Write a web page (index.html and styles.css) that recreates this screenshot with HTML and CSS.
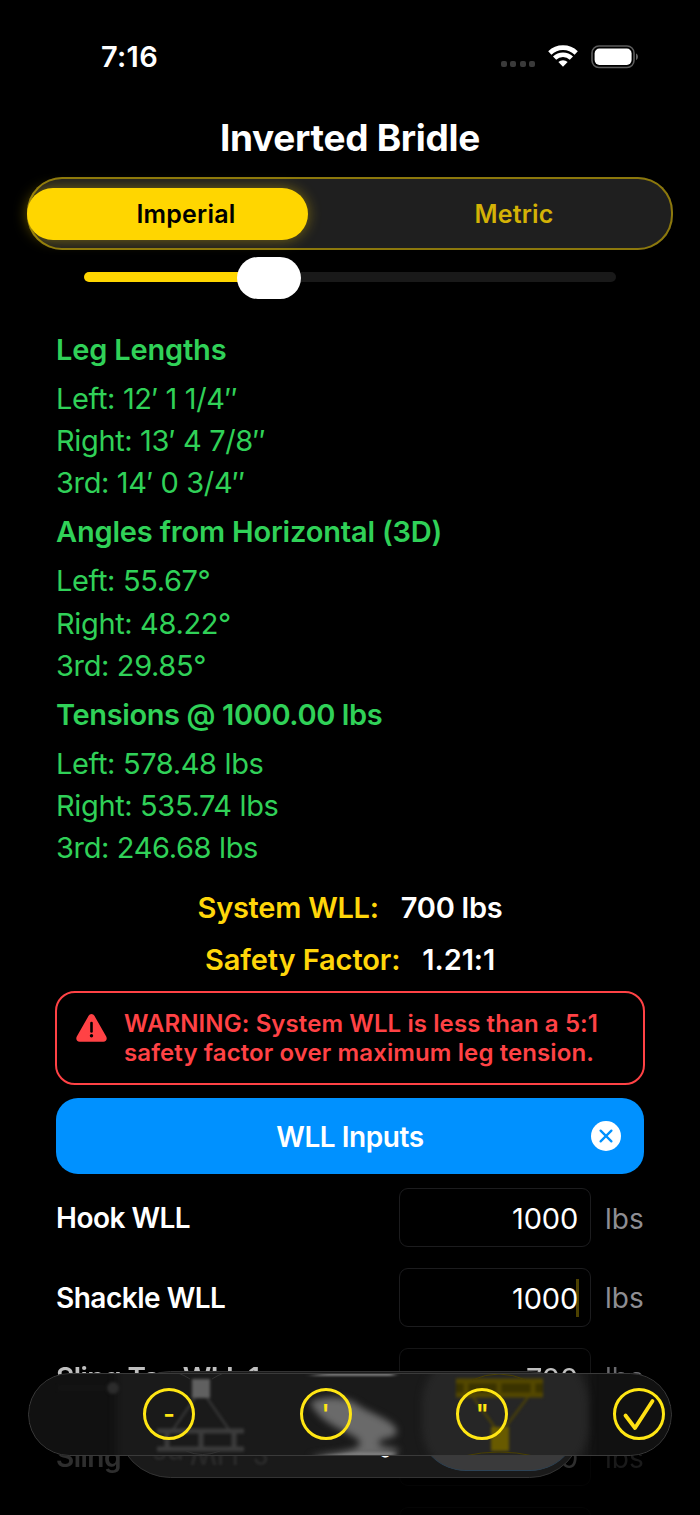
FILE: index.html
```html
<!DOCTYPE html>
<html lang="en">
<head>
  <meta charset="UTF-8">
  <meta name="viewport" content="width=device-width, initial-scale=1.0">
  <title>Inverted Bridle</title>
  <link rel="stylesheet" href="styles.css">
</head>
<body>

  <div class="screen">
    <!-- Status Bar -->
    <div class="status-bar">
      <span class="time">7:16</span>
      <div class="status-icons">
        <div class="signal"><i></i><i></i><i></i><i></i></div>
        <svg class="wifi" viewBox="0 0 30 22" width="30" height="22">
          <g fill="none" stroke="#fff" stroke-width="4.6">
            <path d="M1.800 8a19 19 0 0 1 26.400 0"/>
            <path d="M6.600 13.200a12 12 0 0 1 16.800 0"/>
          </g>
          <path d="M10.400 17a6.600 6.600 0 0 1 9.200 0L15 21.800z" fill="#fff"/>
        </svg>
        <svg class="battery" viewBox="0 0 48 24" width="48" height="24">
          <rect x="1" y="1" width="42" height="21.500" rx="7" fill="none" stroke="#5c5c5c" stroke-width="1.600"/>
          <rect x="3.600" y="3.600" width="37" height="16.300" rx="4.800" fill="#fff"/>
          <path d="M45 8.500c2.600 1 2.600 5.500 0 6.500z" fill="#666"/>
        </svg>
      </div>
    </div>

    <h1>Inverted Bridle</h1>

    <!-- Unit Switch -->
    <div class="segment">
      <span class="segment-pill"></span>
      <span class="segment-item active">Imperial</span>
      <span class="segment-item">Metric</span>
    </div>

    <div class="slider">
      <div class="slider-fill"></div>
      <div class="slider-thumb"></div>
      <div class="slider-rest"></div>
    </div>

    <!-- Results -->
    <div class="results">
      <h2>Leg Lengths</h2>
      <p>Left: 12′ 1 1/4″</p>
      <p>Right: 13′ 4 7/8″</p>
      <p>3rd: 14′ 0 3/4″</p>
      <h2>Angles from Horizontal (3D)</h2>
      <p>Left: 55.67°</p>
      <p>Right: 48.22°</p>
      <p>3rd: 29.85°</p>
      <h2 class="tensions">Tensions @ 1000.00 lbs</h2>
      <p>Left: 578.48 lbs</p>
      <p>Right: 535.74 lbs</p>
      <p>3rd: 246.68 lbs</p>
    </div>

    <div class="summary"><span>System WLL:</span><b>700 lbs</b></div>
    <div class="summary safety"><span>Safety Factor:</span><b>1.21:1</b></div>

    <div class="warning">
      <svg viewBox="0 0 31 28" width="31" height="28">
        <path d="M12.600 1.800a3.300 3.300 0 0 1 5.800 0l11.800 20.700c1.300 2.300 0 5.200-2.900 5.200H3.700c-2.900 0-4.200-2.900-2.900-5.200z" fill="#ff4245"/>
        <path d="M15.500 9v8.500" stroke="#000" stroke-width="2.600" stroke-linecap="round"/>
        <circle cx="15.500" cy="21.800" r="1.700" fill="#000"/>
      </svg>
      <p>WARNING: System WLL is less than a 5:1<br>safety factor over maximum leg tension.</p>
    </div>

    <div class="wll-button">
      <span>WLL Inputs</span>
      <svg viewBox="0 0 30 30" width="30" height="30">
        <circle cx="15" cy="15" r="15" fill="#fff"/>
        <path d="M9.600 9.600l10.800 10.800M20.400 9.600L9.600 20.400" stroke="#0091ff" stroke-width="2.300" stroke-linecap="round"/>
      </svg>
    </div>

    <!-- WLL Fields -->
    <div class="fields">
      <div class="field"><label>Hook WLL</label><div class="input">1000</div><span>lbs</span></div>
      <div class="field"><label>Shackle WLL</label><div class="input">1000<i class="caret"></i></div><span>lbs</span></div>
      <div class="field fade"><label>Sling Tag WLL 1</label><div class="input">700</div><span>lbs</span></div>
      <div class="field fade-more"><label>Sling</label><div class="input">700</div><span>lbs</span></div>
      <div class="field fade-more"><label></label><div class="input"></div><span></span></div>
    </div>

    <!-- Tab bar, sits under the keyboard toolbar -->
    <div class="tab-bar">
      <span class="tab-refraction">ag WLL 2</span>
      <div class="tab-selected"></div>
      <span class="tab-label">g</span>
    </div>

    <div class="toolbar">
      <svg class="glass" viewBox="0 0 644 84" width="644" height="84" color-interpolation-filters="sRGB">
        <defs>
          <filter id="soft" x="-20%" y="-20%" width="140%" height="140%"><feGaussianBlur stdDeviation="1.700"/></filter>
          <filter id="softer" x="-20%" y="-40%" width="140%" height="180%"><feGaussianBlur stdDeviation="3.500"/></filter>
          <filter id="streak" x="-20%" y="-200%" width="140%" height="500%"><feGaussianBlur stdDeviation="3 1"/></filter>
        </defs>
        <rect x="88" y="-40" width="474" height="160" rx="30" fill="#1a1a1a" filter="url(#softer)"/>
        <rect x="394" y="-20" width="166" height="124" rx="50" fill="#262626" filter="url(#softer)"/>
        <rect x="30" y="12" width="48" height="6" fill="#141414" filter="url(#soft)"/>
        <circle cx="85" cy="15" r="6" fill="#2c2c2c" filter="url(#soft)"/>
        <g filter="url(#soft)" stroke="#3c3c3c" fill="none">
          <rect x="164" y="6" width="18" height="19" fill="#606060" stroke="none"/>
          <path d="M167 25l-23 33M179 25l23 33" stroke-width="2"/>
          <path d="M129 58h87M129 76h87" stroke-width="5"/>
          <path d="M139 58v18M173 58v18M206 58v18" stroke-width="5"/>
        </g>
        <path d="M282 29c16-7 36-6 48 3 12 9 38 15 39 27-2 8-20 5-18 12 1 4 20 3 20 7 0 6-55 8-90 6 20-5 51-5 51-14-1-10-38-14-50-41z" fill="#6a6a6a" filter="url(#softer)"/>
        <path d="M280 3h86v-3H300zM286 83l44-4h36v4z" fill="#7d7d7d" filter="url(#streak)"/>
        <g filter="url(#soft)" stroke="#544800" fill="none">
          <rect x="428" y="6" width="87" height="18" fill="#3a3300" stroke="none"/>
          <path d="M428 8h87M428 22h87" stroke-width="5"/>
          <path d="M438 8v14M471 8v14M505 8v14" stroke-width="5"/>
          <path d="M445 24l23 32M500 24l-24 32" stroke-width="2"/>
          <rect x="463" y="54" width="18" height="24" fill="#685a00" stroke="none"/>
        </g>
        <path d="M444 7q27-12 54 0M436 83q35-8 70 0" fill="none" stroke="#4a4000"/>
        <path d="M150 0q6 2 12 6M196 0q-6 2-12 6M158 78q16 7 34 0" fill="none" stroke="#333"/>
      </svg>
      <span class="key">-</span>
      <span class="key">'</span>
      <span class="key">"</span>
      <span class="key done">
        <svg viewBox="0 0 52 52" width="52" height="52">
          <path d="M12.500 27.500l9.500 12.500L39.500 13" fill="none" stroke="#ffe014" stroke-width="3.800" stroke-linecap="round" stroke-linejoin="round"/>
        </svg>
      </span>
    </div>
  </div>

</body>
</html>
```
FILE: styles.css
```css
/* Global Styles */
* {
  box-sizing: border-box;
}

body {
  font-family: Inter, "Liberation Sans", sans-serif;
  background-color: #000;
  color: #fff;
  margin: 0;
}

.screen {
  position: relative;
  width: 700px;
  height: 1515px;
  overflow: hidden;
}

h1, h2, p {
  margin: 0;
}

/* Status Bar */
.status-bar {
  display: flex;
  justify-content: space-between;
  height: 114px;
  padding: 0 62px 0 101px;
  align-items: center;
}

.time {
  margin-top: -1px;
  font-size: 29px;
  font-weight: 600;
  letter-spacing: 0.300px;
}

.status-icons {
  display: flex;
  align-items: center;
}

.signal {
  display: flex;
  gap: 3.500px;
  margin: 14px 13px 0 0;
}

.signal i {
  width: 6px;
  height: 6px;
  border-radius: 2px;
  background-color: #3a3a3a;
}

.wifi {
  margin: -2px 13px 0 0;
}

.battery {
  margin-right: -1px;
}

h1 {
  height: 63px;
  line-height: 47px;
  text-align: center;
  font-size: 37px;
  font-weight: 700;
  letter-spacing: -0.300px;
}

/* Unit Switch */
.segment {
  position: relative;
  display: flex;
  width: 646px;
  height: 73px;
  margin: 0 auto;
  background-color: #1f1f1f;
  border-radius: 35px;
  box-shadow: inset 0 0 0 2px #8c780c;
}

.segment-pill {
  position: absolute;
  left: 0;
  top: 11px;
  width: 281px;
  height: 52px;
  border-radius: 26px;
  background-color: #ffd600;
  box-shadow: 0 0 14px rgba(255, 214, 0, 0.4);
}

.segment-item {
  position: relative;
  flex: 1;
  margin-right: -5px;
  line-height: 75px;
  text-align: center;
  font-size: 25px;
  font-weight: 600;
  letter-spacing: 0.200px;
  color: #d4b206;
}

.segment-item.active {
  margin: 0 0 0 -5px;
  color: #000;
}

/* Slider */
.slider {
  display: flex;
  align-items: center;
  height: 42px;
  margin: 7px 84px 0;
}

.slider-fill {
  width: 168px;
  height: 10px;
  margin: -2px -15px 0 0;
  border-radius: 5px;
  background-color: #ffd600;
}

.slider-thumb {
  position: relative;
  width: 64px;
  height: 42px;
  border-radius: 21px;
  background-color: #fff;
}

.slider-rest {
  flex: 1;
  height: 10px;
  margin-top: -2px;
  border-radius: 0 5px 5px 0;
  background-color: #191919;
}

/* Results */
.results {
  margin: 30px 56px 0;
  color: #30d158;
  font-size: 29px;
  line-height: 42.100px;
  letter-spacing: -0.360px;
}

.results h2 {
  font-size: 29px;
  font-weight: 600;
  letter-spacing: -0.180px;
  margin-bottom: 7px;
}

.results .tensions {
  letter-spacing: -0.380px;
}

.results p + h2 {
  margin-top: 7px;
}

.summary {
  display: flex;
  justify-content: center;
  gap: 22px;
  height: 52px;
  line-height: 52px;
  margin-top: 13px;
  font-size: 29px;
  font-weight: 600;
  letter-spacing: -0.250px;
}

.summary span {
  color: #ffd60a;
}

.summary b {
  font-weight: 600;
}

.summary.safety {
  margin-top: 0;
  letter-spacing: -0.100px;
}

/* Warning */
.warning {
  display: flex;
  height: 94px;
  margin: 5px 55px 0;
  padding: 16px 0 0 19px;
  border: 2px solid #ff4245;
  border-radius: 20px;
  color: #ff4245;
  font-size: 24px;
  font-weight: 600;
  line-height: 29.300px;
  letter-spacing: 0.100px;
}

.warning svg {
  margin: 5px 17px 0 0;
}

.wll-button {
  display: flex;
  align-items: center;
  height: 76px;
  margin: 13px 56px 0;
  padding-right: 23px;
  border-radius: 22px;
  background-color: #0091ff;
  font-size: 28px;
  font-weight: 600;
  letter-spacing: -0.450px;
}

.wll-button span {
  flex: 1;
  padding: 1px 0 0 53px;
  text-align: center;
}

/* WLL Fields */
.fields {
  display: flex;
  flex-direction: column;
  gap: 20.700px;
  margin: 14px 56px 0;
}

.field {
  display: flex;
  align-items: center;
  height: 59px;
  font-size: 28px;
}

.field label {
  flex: 1;
  padding-top: 1px;
  font-weight: 600;
  letter-spacing: -0.500px;
}

.field > span {
  width: 39px;
  margin: 2px 0 0 14px;
  color: #8e8e93;
}

.input {
  position: relative;
  width: 192px;
  height: 59px;
  padding-right: 12px;
  border: 1.500px solid #1c1c1e;
  border-radius: 9px;
  font-size: 29px;
  letter-spacing: -0.200px;
  line-height: 59px;
  text-align: right;
}

.caret {
  position: absolute;
  right: 11px;
  top: 10px;
  width: 3px;
  height: 38px;
  background-color: rgba(255, 214, 0, 0.300);
}

.fade {
  opacity: 0.750;
}

.fade-more {
  opacity: 0.180;
}

/* Bottom bars */
.tab-bar {
  position: absolute;
  left: 117px;
  top: 1371px;
  width: 466px;
  height: 107px;
  border-radius: 54px;
  overflow: hidden;
  background-color: #1a1a1a;
  border: 1.500px solid #333;
}

/* The field label behind the glass edge, flipped by it */
.tab-refraction {
  position: absolute;
  left: 34px;
  top: 66px;
  font-size: 27px;
  font-weight: 600;
  letter-spacing: -0.500px;
  color: #292929;
  filter: blur(1px);
  transform: scaleY(-1);
}

.tab-selected {
  position: absolute;
  right: 4px;
  bottom: 6px;
  width: 160px;
  height: 96px;
  border-radius: 48px;
  background-color: #3a3a3b;
  border-bottom: 1px solid #2d4356;
}

.tab-label {
  position: absolute;
  left: 262px;
  top: 66px;
  font-size: 17px;
  font-weight: 500;
}

.toolbar {
  position: absolute;
  left: 28px;
  top: 1373px;
  display: flex;
  align-items: center;
  justify-content: space-between;
  width: 644px;
  height: 83px;
  padding: 0 7px 1px 115px;
  border-radius: 42px;
  overflow: hidden;
  background-color: #111;
}

.toolbar::after {
  content: "";
  position: absolute;
  inset: 0;
  border: 1.500px solid #3a3a3a;
  border-radius: 42px;
}

.glass {
  position: absolute;
  left: 0;
  top: 0;
}

.key {
  position: relative;
  width: 52px;
  height: 52px;
  border: 3px solid #ffe614;
  border-radius: 50%;
  line-height: 46px;
  text-align: center;
  font-size: 25px;
  font-weight: 600;
  color: #ffe614;
}

.key svg {
  position: absolute;
  left: -3px;
  top: -3px;
}
```
